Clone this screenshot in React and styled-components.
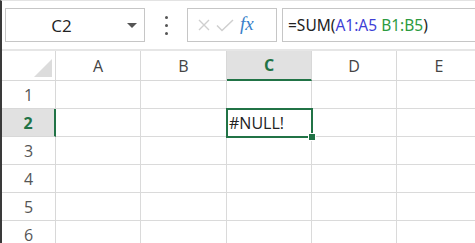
import React from 'react';
import styled, { createGlobalStyle } from 'styled-components';

const Global = createGlobalStyle`
  html, body { margin: 0; padding: 0; background: #fff; }
  body { font-family: "Open Sans", "Noto Sans", sans-serif; }
`;

const columns = ['A', 'B', 'C', 'D', 'E'];
const rows = [1, 2, 3, 4, 5, 6];
const activeCol = 'C';
const activeRow = 2;

function App() {
  return (
    <Frame>
      <Global />
      <FormulaBar>
        <NameBox>
          <NameText>C2</NameText>
          <Caret />
        </NameBox>
        <Grip>
          <i /><i /><i />
        </Grip>
        <FxBox>
          <svg width="12" height="12" viewBox="0 0 12 12">
            <path d="M1 1 L11 11 M11 1 L1 11" stroke="#cfcfcf" strokeWidth="1.4" fill="none" />
          </svg>
          <svg width="18" height="13" viewBox="0 0 18 13">
            <path d="M1 6.5 L6 11.5 L17 1" stroke="#cfcfcf" strokeWidth="1.5" fill="none" />
          </svg>
          <Fx>fx</Fx>
        </FxBox>
        <Input>
          <span>
            =SUM(<Ref color="#3f3fd6">A1:A5</Ref>{' '}<Ref color="#2d9b40">B1:B5</Ref>)
          </span>
        </Input>
      </FormulaBar>
      <Sheet>
        <Corner><Tri /></Corner>
        {columns.map((c) => (
          <ColHead key={c} active={c === activeCol}>{c}</ColHead>
        ))}
        {rows.map((r) => (
          <React.Fragment key={r}>
            <RowHead active={r === activeRow}>{r}</RowHead>
            {columns.map((c) => (
              <Cell key={c}>
                {c === activeCol && r === activeRow && (
                  <Selected>#NULL!</Selected>
                )}
              </Cell>
            ))}
          </React.Fragment>
        ))}
      </Sheet>
    </Frame>
  );
}

export default App;

const Frame = styled.div`
  width: 475px;
  height: 243px;
  overflow: hidden;
  box-sizing: border-box;
  border-left: 2px solid #3a3a3a;
  border-top: 1px solid #e3e3e3;
  display: flex;
  flex-direction: column;
`;

const FormulaBar = styled.div`
  flex-shrink: 0;
  height: 41px;
  padding-top: 7px;
  padding-left: 3px;
  display: flex;
  align-items: flex-start;
  border-bottom: 2px solid #e6e6e6;
`;

const NameBox = styled.div`
  width: 140px;
  height: 34px;
  box-sizing: border-box;
  border: 1px solid #c6c6c6;
  display: flex;
  align-items: center;
`;

const NameText = styled.span`
  flex: 1;
  text-align: center;
  font-size: 17px;
  color: #222;
  padding-right: 10px;
`;

const Caret = styled.span`
  width: 0;
  height: 0;
  border-left: 5px solid transparent;
  border-right: 5px solid transparent;
  border-top: 5px solid #555;
  margin-right: 7px;
`;

const Grip = styled.div`
  width: 42px;
  height: 34px;
  display: flex;
  flex-direction: column;
  align-items: center;
  justify-content: center;
  gap: 5px;
  i {
    width: 3px;
    height: 3px;
    border-radius: 50%;
    background: #555;
  }
`;

const FxBox = styled.div`
  width: 90px;
  height: 34px;
  box-sizing: border-box;
  border: 1px solid #c6c6c6;
  display: flex;
  align-items: center;
  gap: 6px;
  padding-left: 10px;
`;

const Fx = styled.span`
  font-family: "Liberation Serif", serif;
  font-style: italic;
  font-size: 19px;
  color: #3a7fc9;
  margin-top: -3px;
`;

const Input = styled.div`
  margin-left: 5px;
  flex: 1;
  height: 34px;
  box-sizing: border-box;
  border: 1px solid #c6c6c6;
  border-right: none;
  display: flex;
  align-items: center;
  padding-left: 5px;
  font-family: "Noto Sans", sans-serif;
  font-size: 15.5px;
  color: #222;
  white-space: pre;
`;

const Ref = styled.span`
  color: ${(p) => p.color};
`;

const Sheet = styled.div`
  flex-shrink: 0;
  display: grid;
  grid-template-columns: 54px 85px 86px 85px 85px 85px;
  grid-template-rows: 30px repeat(6, 28px);
`;

const Corner = styled.div`
  border-right: 1px solid #d8d8d8;
  border-bottom: 1px solid #d8d8d8;
  position: relative;
`;

const Tri = styled.div`
  position: absolute;
  right: 3px;
  bottom: 3px;
  width: 0;
  height: 0;
  border-left: 18px solid transparent;
  border-bottom: 18px solid #dcdcdc;
`;

const ColHead = styled.div`
  border-right: 1px solid #d8d8d8;
  border-bottom: ${(p) => (p.active ? '2px solid #217346' : '1px solid #d8d8d8')};
  background: ${(p) => (p.active ? '#e1e1e1' : '#fff')};
  color: ${(p) => (p.active ? '#217346' : '#444')};
  font-weight: ${(p) => (p.active ? 700 : 400)};
  font-size: 16px;
  display: flex;
  align-items: center;
  justify-content: center;
  box-sizing: border-box;
`;

const RowHead = styled.div`
  border-right: ${(p) => (p.active ? '2px solid #217346' : '1px solid #d8d8d8')};
  border-bottom: 1px solid #d8d8d8;
  background: ${(p) => (p.active ? '#e1e1e1' : '#fff')};
  color: ${(p) => (p.active ? '#217346' : '#555')};
  font-weight: ${(p) => (p.active ? 700 : 400)};
  font-size: 16px;
  display: flex;
  align-items: center;
  justify-content: center;
  box-sizing: border-box;
`;

const Cell = styled.div`
  border-right: 1px solid #dadada;
  border-bottom: 1px solid #dadada;
  box-sizing: border-box;
  position: relative;
`;

const Selected = styled.div`
  position: absolute;
  z-index: 1;
  left: -1px;
  top: -1px;
  right: -2px;
  bottom: -2px;
  border: 2px solid #217346;
  display: flex;
  align-items: center;
  padding-left: 1px;
  font-family: "Open Sans", sans-serif;
  font-size: 16px;
  font-weight: 500;
  color: #222;
  &::after {
    content: '';
    position: absolute;
    right: -5px;
    bottom: -5px;
    width: 6px;
    height: 6px;
    background: #217346;
    border: 1px solid #fff;
  }
`;
